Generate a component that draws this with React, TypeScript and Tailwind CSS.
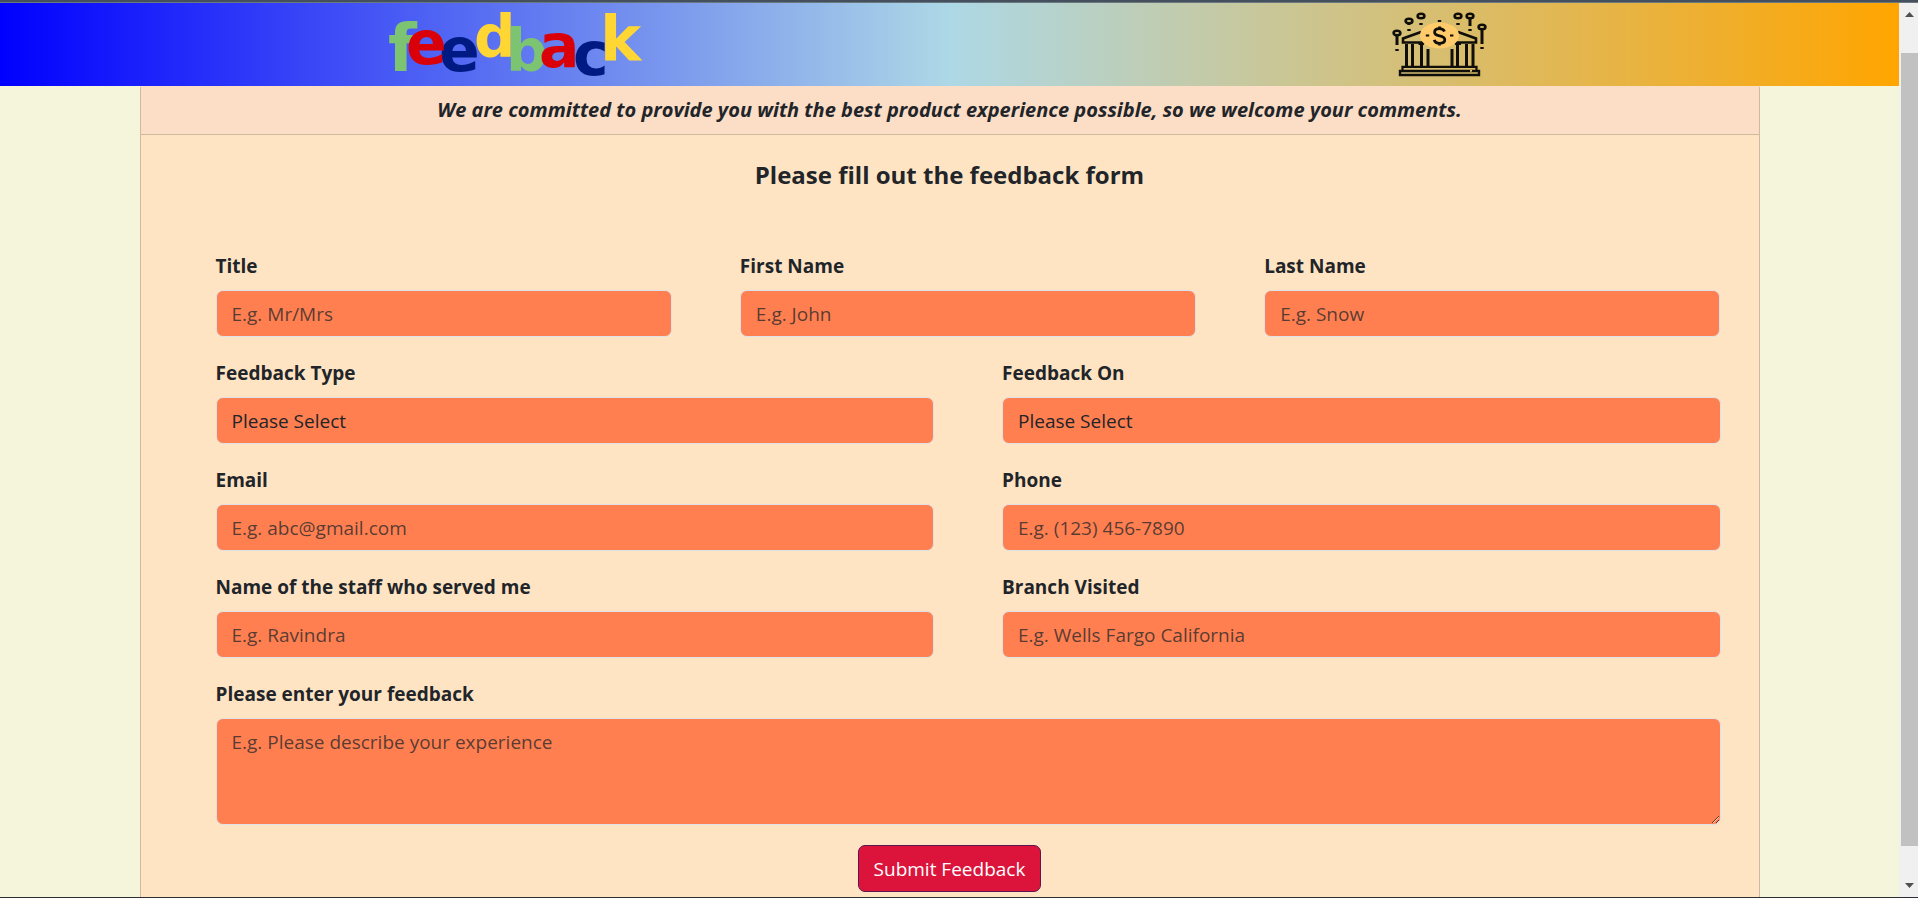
import type { ReactNode } from "react";

const control =
  "block w-full rounded-[7px] border border-[#dee2e6] bg-[#ff7f50] px-[15px] text-[19px] leading-[30px] text-[#212529] placeholder:text-[#212529]/75 outline-none focus:ring-2 focus:ring-[#dc143c]/40";

const stems = [
  { x: 4, y: 20, end: 32, dot: 37 },
  { x: 16, y: 8, end: 12, dot: 17 },
  { x: 28, y: 3, end: 6, dot: 11 },
  { x: 65, y: 3, end: 6, dot: 11 },
  { x: 77, y: 3, end: 13, dot: 17 },
  { x: 89, y: 14, end: 31, dot: 35 },
];

function FeedbackLogo() {
  return (
    <svg
      width="254"
      height="66"
      viewBox="0 0 254 66"
      role="img"
      aria-label="feedback"
      className="shrink-0 overflow-visible font-['DejaVu_Sans'] font-bold"
    >
      <text x="-1" y="59" fontSize="66" fill="#7cc372">f</text>
      <text x="50" y="59" fontSize="60" fill="#001a84">e</text>
      <text x="17" y="52" fontSize="60" fill="#d90009">e</text>
      <text x="85" y="45" fontSize="58" fill="#ffd633">d</text>
      <text x="117" y="59" fontSize="58" fill="#7cc372">b</text>
      <text x="150" y="55" fontSize="60" fill="#d90009">a</text>
      <text x="211" y="48" fontSize="62" fill="#ffd633">k</text>
      <text x="184" y="63" fontSize="60" fill="#001a84">c</text>
    </svg>
  );
}

function BankIcon() {
  return (
    <svg
      width="94"
      height="64"
      viewBox="0 0 94 64"
      role="img"
      aria-label="Bank"
      className="shrink-0 overflow-visible"
      fill="none"
      stroke="#0f0e08"
      strokeWidth="3"
    >
      {stems.map((s) => (
        <g key={s.x}>
          <ellipse cx={s.x} cy={s.y} rx="3.4" ry="2.2" strokeWidth="2.6" />
          <path d={`M${s.x} ${s.y + 2}V${s.end}`} strokeWidth="3" />
          <path d={`M${s.x - 1.7} ${s.dot}h3.4`} strokeWidth="2" />
        </g>
      ))}
      <path d="M28 19L10 25.500V29.500H32M65 19L83 25.500V29.500H60" strokeWidth="2.6" />
      <path d="M13.500 31V53M19.500 31V53M28.500 31V53M35 36V53M59 36V53M64.500 31V53M73.500 31V53M80 31V53" strokeWidth="3" />
      <path d="M25.500 31H31M62 31H68" strokeWidth="2" />
      <path d="M9.500 57V53.800H83.500V57" strokeWidth="2.2" />
      <path d="M7 62V58H86V62Z" strokeWidth="2.4" />
      <path d="M77 57.800h2" stroke="#d7bb68" strokeWidth="2" />
      <ellipse cx="46.500" cy="22.500" rx="19.500" ry="13" fill="#ffcb6b" stroke="none" />
      <path
        d="M51.500 18.500C50.500 16.300 48.800 15.600 46.500 15.600C43.500 15.600 41.600 17 41.600 19.200C41.600 21.300 43.300 22.200 46.600 22.800C50 23.400 51.800 24.500 51.800 26.800C51.800 29 49.700 30.300 46.700 30.300C43.800 30.300 41.900 29.200 41.200 26.800M46.500 13.500V16M46.500 30V32.500"
        strokeWidth="2.8"
      />
      <path d="M32.800 22.500h3.400M57 22.500h3.400M44.800 8h3.400" strokeWidth="2" />
    </svg>
  );
}

function Field({ id, label, children }: { id: string; label: string; children: ReactNode }) {
  return (
    <div className="min-w-0 flex-1">
      <label htmlFor={id} className="mb-[9px] block pt-px text-[19px] leading-[30px] font-bold">
        {label}
      </label>
      {children}
    </div>
  );
}

function TextField({ id, label, hint, type = "text" }: { id: string; label: string; hint: string; type?: string }) {
  return (
    <Field id={id} label={label}>
      <input id={id} type={type} placeholder={hint} className={`${control} h-[47px]`} />
    </Field>
  );
}

function SelectField({ id, label, options }: { id: string; label: string; options: string[] }) {
  return (
    <Field id={id} label={label}>
      <select id={id} className={`${control} h-[47px] appearance-none`}>
        <option>Please Select</option>
        {options.map((o) => (
          <option key={o}>{o}</option>
        ))}
      </select>
    </Field>
  );
}

function Row({ children }: { children: ReactNode }) {
  return <div className="flex gap-[68px]">{children}</div>;
}

function ScrollRail() {
  return (
    <div aria-hidden="true" className="flex w-[19px] shrink-0 flex-col bg-[#f0f0f0] pl-0.5">
      <div className="flex h-[50px] justify-center pt-[9px]">
        <svg width="9" height="5" viewBox="0 0 9 5" fill="#505050">
          <path d="M0 5L4.500 0L9 5Z" />
        </svg>
      </div>
      <div className="flex-1 bg-[#c1c1c1]" />
      <div className="flex h-[51px] items-end justify-center pb-[9px]">
        <svg width="9" height="5" viewBox="0 0 9 5" fill="#505050">
          <path d="M0 0L4.500 5L9 0Z" />
        </svg>
      </div>
    </div>
  );
}

export default function App() {
  return (
    <div className="flex h-screen flex-col overflow-hidden border-b border-[#2b2f33] bg-[#f5f5dc] font-['Open_Sans','Noto_Sans',sans-serif] text-[#212529]">
      <div className="h-[3px] shrink-0 border-b border-[#6b7880] bg-[#45505e]" />
      <div className="flex min-h-0 flex-1">
        <div className="min-w-0 flex-1 overflow-hidden">
          <header className="flex h-[83px] items-center justify-between bg-[linear-gradient(to_right,blue,lightblue,orange)] pr-[21.7%] pl-[20.5%]">
            <FeedbackLogo />
            <BankIcon />
          </header>
          <main className="mx-auto max-w-[1620px] rounded-t-xs border-x border-[#cfb7a0] bg-[#ffe4c4]">
            <p className="rounded-t-xs border-b border-[#cfb7a0] bg-[#fcddc6] py-[9px] text-center text-[20px] leading-[30px] font-bold italic">
              We are committed to provide you with the best product experience possible, so we welcome your comments.
            </p>
            <form className="flex flex-col gap-5 pt-[25px] pr-[38px] pb-10 pl-[75px]" onSubmit={(e) => e.preventDefault()}>
              <h1 className="mb-10 pr-[37px] text-center text-[24px] leading-[30px] font-bold">
                Please fill out the feedback form
              </h1>
              <Row>
                <TextField id="title" label="Title" hint="E.g. Mr/Mrs" />
                <TextField id="first-name" label="First Name" hint="E.g. John" />
                <TextField id="last-name" label="Last Name" hint="E.g. Snow" />
              </Row>
              <Row>
                <SelectField id="feedback-type" label="Feedback Type" options={["Compliment", "Complaint", "Suggestion"]} />
                <SelectField id="feedback-on" label="Feedback On" options={["Product", "Service", "Staff"]} />
              </Row>
              <Row>
                <TextField id="email" label="Email" hint="E.g. abc@gmail.com" type="email" />
                <TextField id="phone" label="Phone" hint="E.g. (123) 456-7890" type="tel" />
              </Row>
              <Row>
                <TextField id="staff" label="Name of the staff who served me" hint="E.g. Ravindra" />
                <TextField id="branch" label="Branch Visited" hint="E.g. Wells Fargo California" />
              </Row>
              <Row>
                <Field id="feedback" label="Please enter your feedback">
                  <textarea
                    id="feedback"
                    placeholder="E.g. Please describe your experience"
                    className={`${control} h-[107px] resize-y py-2`}
                  />
                </Field>
              </Row>
              <div className="flex justify-center pr-[37px]">
                <button
                  type="submit"
                  className="h-[47px] rounded-[7px] border border-[#5c1650] bg-[#dc143c] px-[15px] text-[19px] leading-[30px] text-white"
                >
                  Submit Feedback
                </button>
              </div>
            </form>
          </main>
        </div>
        <ScrollRail />
      </div>
    </div>
  );
}
